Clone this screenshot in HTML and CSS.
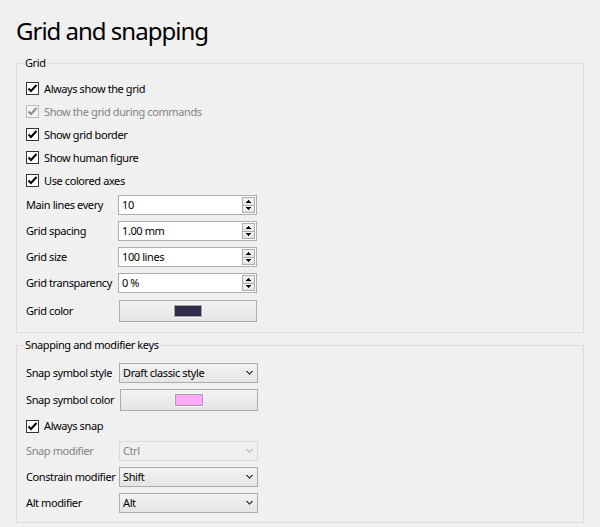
FILE: index.html
```html
<!DOCTYPE html>
<html>
<head>
<meta charset="utf-8">
<link rel="stylesheet" href="styles.css">
</head>
<body>
<h1 class="title">Grid and snapping</h1>

<fieldset class="group group-grid">
  <legend class="legend">Grid</legend>
  <div class="check"><span class="box"><svg width="11" height="11" viewBox="0 0 11 11"><polyline points="1.5,5.5 4,8 9.5,2" fill="none" stroke="#000" stroke-width="2"/></svg></span>Always show the grid</div>
  <div class="check disabled"><span class="box"><svg width="11" height="11" viewBox="0 0 11 11"><polyline points="1.5,5.5 4,8 9.5,2" fill="none" stroke="#8a8a8a" stroke-width="2"/></svg></span>Show the grid during commands</div>
  <div class="check"><span class="box"><svg width="11" height="11" viewBox="0 0 11 11"><polyline points="1.5,5.5 4,8 9.5,2" fill="none" stroke="#000" stroke-width="2"/></svg></span>Show grid border</div>
  <div class="check"><span class="box"><svg width="11" height="11" viewBox="0 0 11 11"><polyline points="1.5,5.5 4,8 9.5,2" fill="none" stroke="#000" stroke-width="2"/></svg></span>Show human figure</div>
  <div class="check"><span class="box"><svg width="11" height="11" viewBox="0 0 11 11"><polyline points="1.5,5.5 4,8 9.5,2" fill="none" stroke="#000" stroke-width="2"/></svg></span>Use colored axes</div>

  <div class="form form-grid">
    <span class="lbl">Main lines every</span>
    <div class="spin"><span class="val">10</span><span class="arrows"><span class="arr"><svg width="5" height="3" viewBox="0 0 5 3" shape-rendering="crispEdges"><rect x="2" y="0" width="1" height="1"/><rect x="1" y="1" width="3" height="1"/><rect x="0" y="2" width="5" height="1"/></svg></span><span class="arr"><svg width="5" height="3" viewBox="0 0 5 3" shape-rendering="crispEdges"><rect x="0" y="0" width="5" height="1"/><rect x="1" y="1" width="3" height="1"/><rect x="2" y="2" width="1" height="1"/></svg></span></span></div>

    <span class="lbl">Grid spacing</span>
    <div class="spin"><span class="val">1.00 mm</span><span class="arrows"><span class="arr"><svg width="5" height="3" viewBox="0 0 5 3" shape-rendering="crispEdges"><rect x="2" y="0" width="1" height="1"/><rect x="1" y="1" width="3" height="1"/><rect x="0" y="2" width="5" height="1"/></svg></span><span class="arr"><svg width="5" height="3" viewBox="0 0 5 3" shape-rendering="crispEdges"><rect x="0" y="0" width="5" height="1"/><rect x="1" y="1" width="3" height="1"/><rect x="2" y="2" width="1" height="1"/></svg></span></span></div>

    <span class="lbl">Grid size</span>
    <div class="spin"><span class="val">100 lines</span><span class="arrows"><span class="arr"><svg width="5" height="3" viewBox="0 0 5 3" shape-rendering="crispEdges"><rect x="2" y="0" width="1" height="1"/><rect x="1" y="1" width="3" height="1"/><rect x="0" y="2" width="5" height="1"/></svg></span><span class="arr"><svg width="5" height="3" viewBox="0 0 5 3" shape-rendering="crispEdges"><rect x="0" y="0" width="5" height="1"/><rect x="1" y="1" width="3" height="1"/><rect x="2" y="2" width="1" height="1"/></svg></span></span></div>

    <span class="lbl">Grid transparency</span>
    <div class="spin"><span class="val">0 %</span><span class="arrows"><span class="arr"><svg width="5" height="3" viewBox="0 0 5 3" shape-rendering="crispEdges"><rect x="2" y="0" width="1" height="1"/><rect x="1" y="1" width="3" height="1"/><rect x="0" y="2" width="5" height="1"/></svg></span><span class="arr"><svg width="5" height="3" viewBox="0 0 5 3" shape-rendering="crispEdges"><rect x="0" y="0" width="5" height="1"/><rect x="1" y="1" width="3" height="1"/><rect x="2" y="2" width="1" height="1"/></svg></span></span></div>

    <span class="lbl lbl-color">Grid color</span>
    <div class="colorbtn colorbtn-grid"><span class="swatch swatch-dark"></span></div>
  </div>
</fieldset>

<fieldset class="group group-snap">
  <legend class="legend">Snapping and modifier keys</legend>
  <div class="form form-snap">
    <span class="lbl">Snap symbol style</span>
    <div class="combo"><span class="val">Draft classic style</span><svg class="chev" width="7" height="4" viewBox="0 0 7 4" shape-rendering="crispEdges"><rect x="0" y="0" width="2" height="1"/><rect x="5" y="0" width="2" height="1"/><rect x="1" y="1" width="2" height="1"/><rect x="4" y="1" width="2" height="1"/><rect x="2" y="2" width="3" height="1"/><rect x="3" y="3" width="1" height="1"/></svg></div>

    <span class="lbl">Snap symbol color</span>
    <div class="colorbtn colorbtn-snap"><span class="swatch swatch-pink"></span></div>

    <div class="check check-span"><span class="box"><svg width="11" height="11" viewBox="0 0 11 11"><polyline points="1.5,5.5 4,8 9.5,2" fill="none" stroke="#000" stroke-width="2"/></svg></span>Always snap</div>

    <span class="lbl disabled">Snap modifier</span>
    <div class="combo combo-disabled"><span class="val">Ctrl</span><svg class="chev" width="7" height="4" viewBox="0 0 7 4" shape-rendering="crispEdges"><rect x="0" y="0" width="2" height="1"/><rect x="5" y="0" width="2" height="1"/><rect x="1" y="1" width="2" height="1"/><rect x="4" y="1" width="2" height="1"/><rect x="2" y="2" width="3" height="1"/><rect x="3" y="3" width="1" height="1"/></svg></div>

    <span class="lbl">Constrain modifier</span>
    <div class="combo"><span class="val">Shift</span><svg class="chev" width="7" height="4" viewBox="0 0 7 4" shape-rendering="crispEdges"><rect x="0" y="0" width="2" height="1"/><rect x="5" y="0" width="2" height="1"/><rect x="1" y="1" width="2" height="1"/><rect x="4" y="1" width="2" height="1"/><rect x="2" y="2" width="3" height="1"/><rect x="3" y="3" width="1" height="1"/></svg></div>

    <span class="lbl">Alt modifier</span>
    <div class="combo"><span class="val">Alt</span><svg class="chev" width="7" height="4" viewBox="0 0 7 4" shape-rendering="crispEdges"><rect x="0" y="0" width="2" height="1"/><rect x="5" y="0" width="2" height="1"/><rect x="1" y="1" width="2" height="1"/><rect x="4" y="1" width="2" height="1"/><rect x="2" y="2" width="3" height="1"/><rect x="3" y="3" width="1" height="1"/></svg></div>
  </div>
</fieldset>
</body>
</html>
```

FILE: styles.css
```css
* { box-sizing: border-box; }

html, body {
  margin: 0;
  padding: 0;
  background: #f0f0f0;
}

body {
  font-family: "Noto Sans", "Open Sans", sans-serif;
  font-size: 11px;
  line-height: 14px;
  letter-spacing: -0.4px;
  color: #000;
  width: 600px;
  height: 527px;
  overflow: hidden;
}

.title {
  margin: 0 0 9px 16px;
  padding-top: 15px;
  font-size: 24px;
  line-height: 32px;
  font-weight: 400;
  letter-spacing: -1px;
}

.group {
  margin: 0 16px;
  border: 1px solid #dcdcdc;
  padding: 7px 9px 10px 9px;
  min-width: 0;
}

.group-snap {
  margin-top: 5px;
  padding-top: 11px;
  padding-bottom: 9px;
}

.legend {
  padding: 0 1px;
  margin-left: -2px;
  line-height: 14px;
}

.check {
  display: flex;
  align-items: center;
  height: 23px;
}

.box {
  width: 13px;
  height: 13px;
  border: 1px solid #333;
  background: #fff;
  margin-right: 5px;
  display: flex;
  align-items: center;
  justify-content: center;
  flex: none;
}

.check.disabled { color: #838383; }
.check.disabled .box {
  border-color: #bcbcbc;
  background: #f4f4f4;
}

.form {
  display: grid;
  align-items: center;
  row-gap: 6px;
}

.form-grid {
  grid-template-columns: 92px 139px;
  margin-top: 3px;
}

.form-snap {
  grid-template-columns: 93px 139px;
}

.lbl { white-space: nowrap; }
.lbl.disabled { color: #838383; }

.lbl-color { margin-top: 1px; }

.spin {
  height: 20px;
  border: 1px solid #adadad;
  background: #fff;
  display: flex;
  align-items: center;
}

.val {
  flex: 1;
  padding-left: 3px;
  white-space: nowrap;
}

.arrows {
  width: 13px;
  height: 16px;
  margin-right: 1px;
  border: 1px solid #adadad;
  background: #e6e6e6;
  display: flex;
  flex-direction: column;
}

.arr {
  flex: 1;
  display: flex;
  align-items: center;
  justify-content: center;
  background: linear-gradient(#f2f2f2, #e4e4e4);
}

.arr + .arr { border-top: 1px solid #adadad; }

.arr svg { fill: #000; }

.combo {
  height: 20px;
  width: 139px;
  border: 1px solid #acacac;
  background: linear-gradient(#f2f2f2, #e5e5e5);
  display: flex;
  align-items: center;
  padding-right: 4px;
}

.combo .chev { fill: #4d4d4d; flex: none; }

.combo-disabled {
  border-color: #d9d9d9;
  background: #efefef;
  color: #838383;
}

.combo-disabled .chev { fill: #c2c2c2; }

.colorbtn {
  height: 22px;
  border: 1px solid #acacac;
  background: linear-gradient(#f2f2f2, #e5e5e5);
  display: flex;
  align-items: center;
  justify-content: center;
}

.colorbtn-grid {
  margin-top: 1px;
  margin-left: 1px;
  width: 138px;
}

.colorbtn-snap {
  margin-left: 1px;
  width: 138px;
}

.swatch {
  width: 28px;
  height: 12px;
  border: 1px solid #a0a0a0;
  box-shadow: 0 0 0 1px #f7f7f7;
}

.swatch-dark { background: #302e4a; }
.swatch-pink { background: #ffaaff; }

.check-span {
  grid-column: 1 / -1;
  height: 18px;
}
```
